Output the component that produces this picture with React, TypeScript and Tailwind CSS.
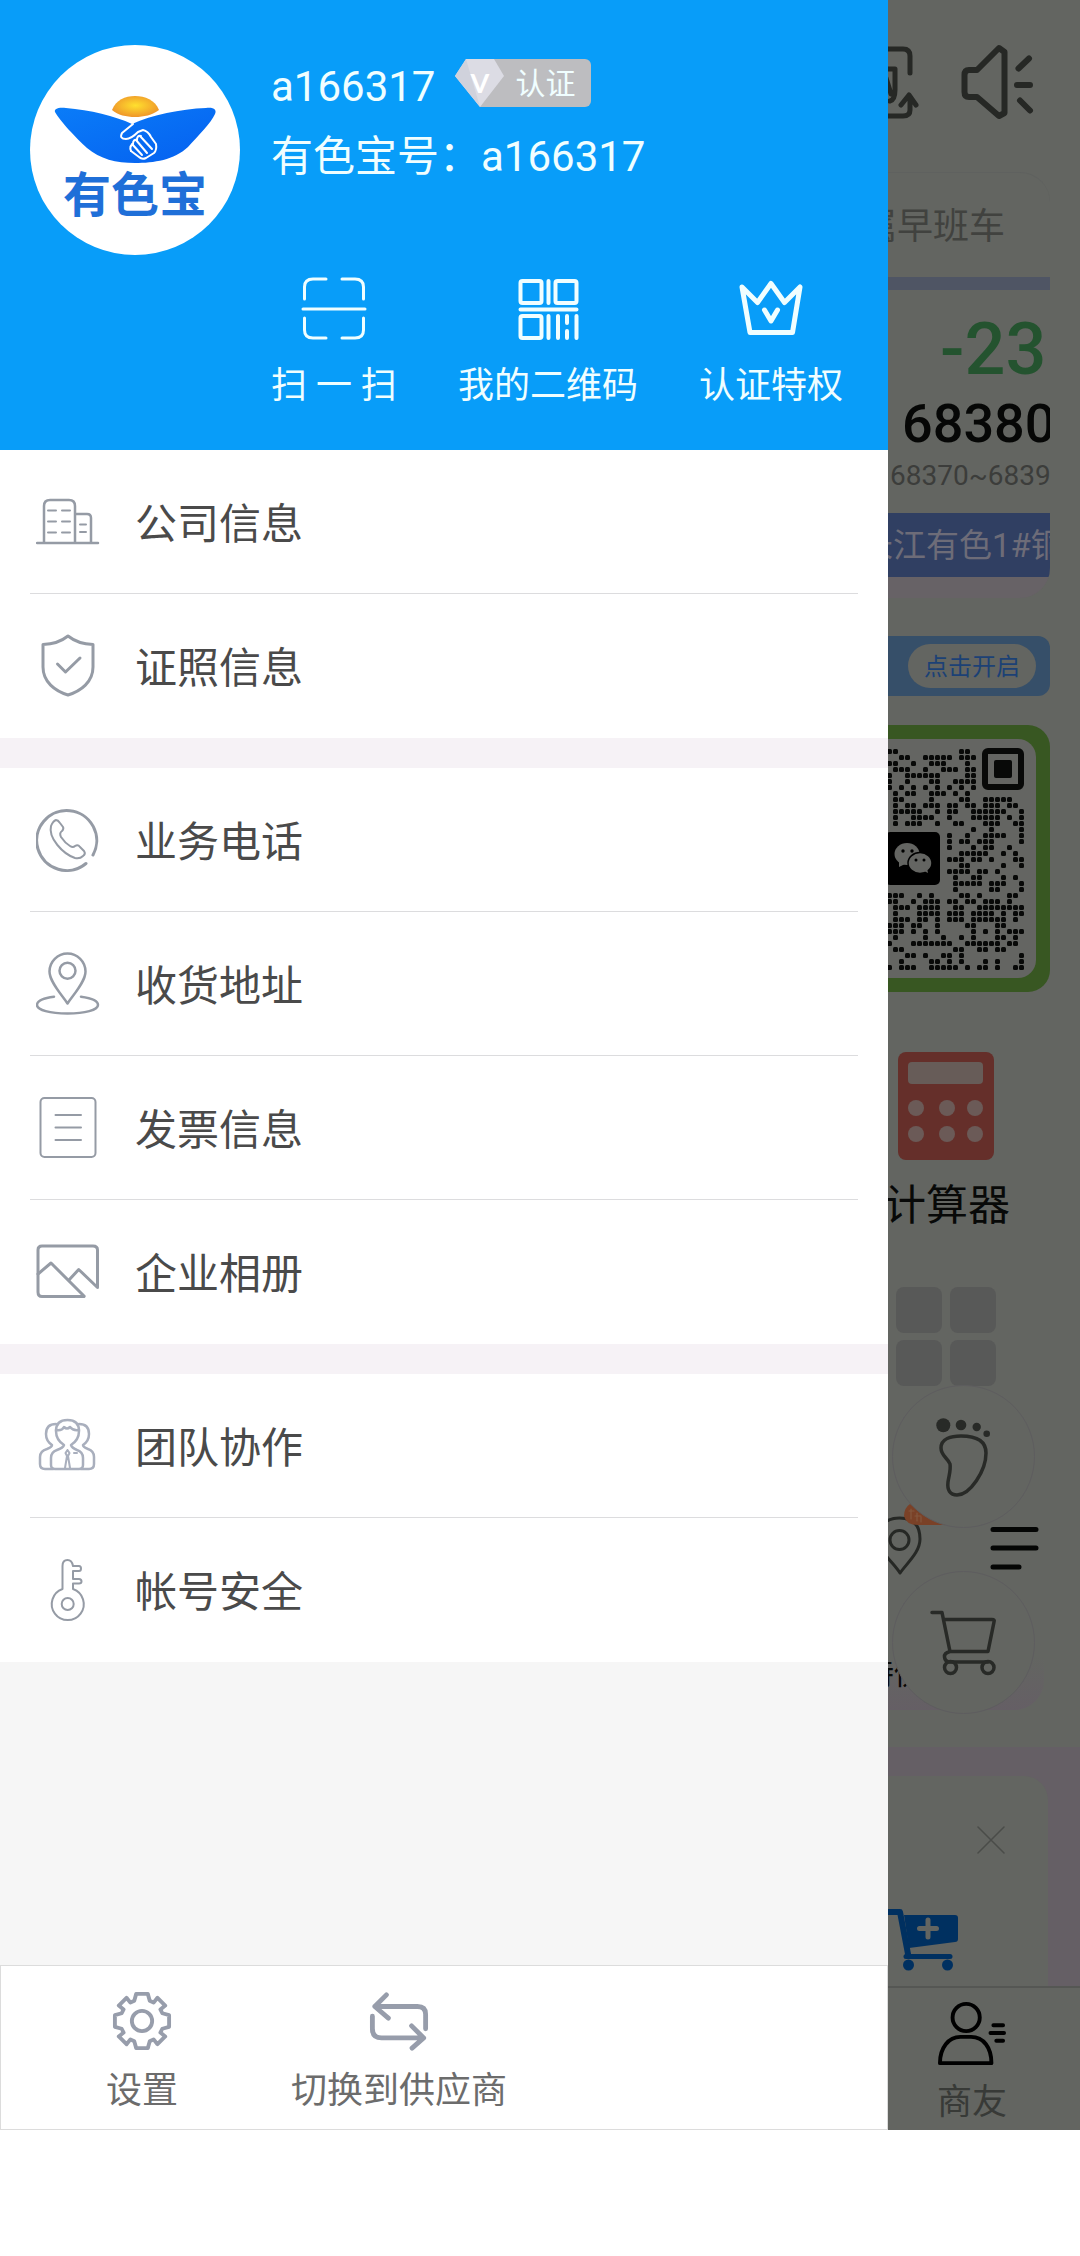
import React from 'react';

interface IconProps {
  children: React.ReactNode;
  className?: string;
  viewBox?: string;
  strokeWidth?: number;
}

interface MenuItem {
  label: string;
  icon: React.ReactNode;
}

const Icon: React.FC<IconProps> = ({ children, className = 'size-16', viewBox = '0 0 64 64', strokeWidth = 2.5 }) => (
  <svg
    className={className}
    viewBox={viewBox}
    fill="none"
    stroke="currentColor"
    strokeWidth={strokeWidth}
    strokeLinecap="round"
    strokeLinejoin="round"
    aria-hidden="true"
  >
    {children}
  </svg>
);

const menuGroups: MenuItem[][] = [
  [
    {
      label: '公司信息',
      icon: (
        <Icon>
          <path d="M1 53H62M8 53V16Q8 10 14 10H33Q39 10 39 16V53M39 24H51Q55 24 55 28V53" />
          <path d="M12 20.500H20M26 20.500H34M12 31.500H20M26 31.500H34M12 42.500H20M26 42.500H34M44 34.500H50M44 42H50" strokeWidth="2" />
        </Icon>
      ),
    },
    {
      label: '证照信息',
      icon: (
        <Icon strokeWidth={3}>
          <path d="M32 2Q22 10 7 10.500V33C7 48 19 57 32 61C45 57 57 48 57 33V10.500Q42 10 32 2Z" />
          <path d="M21.500 30L29.500 38L44 24" />
        </Icon>
      ),
    },
  ],
  [
    {
      label: '业务电话',
      icon: (
        <Icon strokeWidth={3}>
          <path d="M57 47A30 30 0 1 0 50 55.500" />
          <path
            strokeWidth="2"
            d="M15 18Q17 13 20 12Q22 12 24 15L27 19Q28 21 26 23Q23 25 25 29Q29 35 34 38Q37 40 39 38Q42 36 44 39L48 43Q50 46 47 48Q44 51 39 50C27 46 12 30 15 18Z"
          />
        </Icon>
      ),
    },
    {
      label: '收货地址',
      icon: (
        <Icon>
          <path d="M31.500 51.500C26 43 13.500 30 13.500 19.500A18 18 0 0 1 49.500 19.500C49.500 30 37 43 31.500 51.500Z" />
          <circle cx="31.500" cy="18.700" r="8" />
          <path d="M18 44.700C8 46 1 49 1 53C1 58 14 61.500 31.500 61.500C49 61.500 62 58 62 53C62 49 55 46 45 44.700" />
        </Icon>
      ),
    },
    {
      label: '发票信息',
      icon: (
        <Icon strokeWidth={2}>
          <rect x="4.500" y="2" width="55" height="59" rx="4" />
          <path d="M19.500 19H45M19.500 31.500H45M19.500 44H45" />
        </Icon>
      ),
    },
    {
      label: '企业相册',
      icon: (
        <Icon strokeWidth={3}>
          <path d="M48 56.500H6Q2 56.500 2 52V10Q2 6 6 6H57Q61.500 6 61.500 10V47.500L42.700 29.500L33 40" />
          <path d="M2 34L15 23L48 56" />
        </Icon>
      ),
    },
  ],
  [
    {
      label: '团队协作',
      icon: (
        <Icon className="size-16 text-[#a9afbd]">
          <path d="M28 31Q20 26 20 17Q20 6 31.500 6Q43 6 43 17Q43 26 35 31Q36 34 41 36Q47 38 47 44V51Q47 55 43 55H19Q15 55 15 51V44Q15 38 21 36Q27 34 28 31Z" />
          <path d="M20 16Q26 17 28 13Q31 16 34 13Q37 17 43 16" />
          <path d="M20 10Q10 10 10 20Q10 27 16 31Q16 33 11 35Q4 37 4 43V50Q4 55 9 55H17M43 10Q53 10 53 20Q53 27 47 31Q47 33 52 35Q58 37 58 43V50Q58 55 53 55H45" />
          <path d="M31.500 36L29.500 39L31 42L29 54M31.500 36L33.500 39L32 42L34 54M38 39H41" strokeWidth="2" />
        </Icon>
      ),
    },
    {
      label: '帐号安全',
      icon: (
        <Icon strokeWidth={2}>
          <path d="M26.500 31V8Q26.500 2 31.500 2Q36 2 37 8H43Q45 8 45 10.500Q45 13 43 13H37V21H43Q45.500 21 45.500 23.500Q45.500 25.500 43 25.500H37V31A16 16 0 1 1 26.500 31Z" />
          <circle cx="31.700" cy="46" r="6" />
        </Icon>
      ),
    },
  ],
];

const quickActions: MenuItem[] = [
  {
    label: '扫 一 扫',
    icon: (
      <Icon className="size-[66px]" viewBox="0 0 66 66" strokeWidth={3}>
        <path d="M3.500 23V11Q3.500 3 12 3H25M41 3H54Q62.500 3 62.500 11V23M3.500 42V54Q3.500 62 12 62H25M41 62H54Q62.500 62 62.500 54V42M2 33H64" />
      </Icon>
    ),
  },
  {
    label: '我的二维码',
    icon: (
      <Icon className="size-[66px]" viewBox="0 0 66 66" strokeWidth={4}>
        <rect x="5.500" y="5" width="21" height="22" rx="2" />
        <rect x="40.500" y="5" width="21" height="22" rx="2" />
        <rect x="5.500" y="40" width="21" height="22" rx="2" />
        <path d="M33.500 5V27M5.500 33.500H61.500M33.500 40V62M43 40V62M52 40V47M52 55V62M61.500 40V62" />
      </Icon>
    ),
  },
  {
    label: '认证特权',
    icon: (
      <Icon className="size-[66px]" viewBox="0 0 66 66" strokeWidth={5}>
        <path d="M4 11L19.500 26.500L33 7.500L46.500 26.500L62 11L54.500 56.500H12Z" />
        <path d="M26.500 34L33 45L39.500 34" />
      </Icon>
    ),
  },
];

// filled modules of the visible part of the code, one list of columns per row
const qrRows: number[][] = [
  [0, 1, 12, 13],
  [2, 3, 6, 7, 8, 9, 10, 12, 13, 14],
  [0, 1, 4, 7, 8, 9, 13],
  [1, 2, 3, 6, 9, 10, 11, 13, 14],
  [0, 3, 4, 5, 6, 7, 8, 13, 14],
  [0, 3, 7, 8, 11, 12, 13, 14],
  [0, 2, 4, 6, 8, 10, 12, 14],
  [1, 3, 4, 7, 8, 9, 11, 13],
  [1, 2, 7, 12, 13, 16, 17, 18, 19, 20],
  [1, 3, 4, 6, 7, 8, 10, 11, 13, 14, 16, 17, 18, 20, 21],
  [1, 2, 3, 4, 5, 8, 10, 11, 14, 15, 16, 17, 18, 19, 22],
  [1, 4, 5, 6, 7, 10, 14, 15, 16, 17, 18, 20, 22],
  [1, 3, 4, 5, 8, 11, 12, 16, 17, 18, 21, 22],
  [14, 17, 22],
  [10, 13, 16, 17, 18, 19, 22],
  [10, 12, 13, 15, 16, 17, 22],
  [10, 14, 16, 17, 20],
  [12, 13, 14, 15, 16, 19, 21],
  [10, 11, 12, 14, 15, 17, 21, 22],
  [12, 13, 19, 22],
  [10, 11, 12, 13, 15, 16, 18],
  [11, 14, 15, 19, 21],
  [11, 12, 13, 14, 15, 17, 18, 19, 22],
  [11, 17, 18, 22],
  [0, 1, 2, 5, 7, 12, 13, 15, 20, 21],
  [0, 1, 4, 6, 7, 8, 10, 11, 13, 14, 16, 17, 18, 20],
  [1, 2, 3, 5, 6, 7, 8, 11, 12, 15, 16, 17, 18, 19, 20, 21, 22],
  [1, 5, 6, 7, 8, 10, 11, 12, 14, 15, 16, 17, 19, 21, 22],
  [1, 2, 3, 5, 6, 8, 10, 11, 12, 14, 15, 16, 17, 18, 19, 21],
  [0, 1, 2, 4, 5, 8, 13, 14, 18, 19],
  [0, 1, 2, 4, 6, 8, 14, 16, 18, 20, 21, 22],
  [1, 6, 9, 12, 14, 18, 19, 21],
  [0, 4, 5, 6, 7, 8, 9, 10, 13, 14, 15, 16, 17, 18, 20, 21],
  [1, 2, 11, 12, 15, 16, 18, 19],
  [3, 4, 6, 9, 10, 12, 22],
  [2, 7, 8, 10, 12, 16, 18, 22],
  [0, 2, 3, 4, 7, 8, 9, 10, 11, 13, 15, 16, 18, 21, 22],
];

const Avatar = () => (
  <div className="flex size-[210px] shrink-0 flex-col items-center rounded-full bg-white">
    <svg className="h-[126px] w-[210px] shrink-0" viewBox="0 0 210 126" aria-hidden="true">
      <defs>
        <radialGradient id="sun" cx="50%" cy="45%" r="55%">
          <stop offset="0" stopColor="#ffe02e" />
          <stop offset="1" stopColor="#ef962a" />
        </radialGradient>
        <linearGradient id="boat" x1="0" y1="0" x2="1" y2="1">
          <stop offset="0" stopColor="#0a7cf8" />
          <stop offset="1" stopColor="#0560f0" />
        </linearGradient>
      </defs>
      <path d="M82 65C86 55 95 51 105 51C115 51 125 55 129 65C122 70 114 72 105 72C96 72 88 70 82 65Z" fill="url(#sun)" />
      <path
        d="M25 67C24 64 28 62 36 63C60 65 85 71 102 79C122 70 150 64 176 63C184 62 187 65 185 69C181 78 168 91 158 102C144 115 124 118 105 118C86 118 70 114 57 103C46 93 30 76 25 67Z"
        fill="url(#boat)"
      />
      <g fill="none" stroke="#fff" strokeWidth="2" strokeLinecap="round" strokeLinejoin="round">
        <path d="M103 79L92 88Q89 94 96 94Q101 94 108 87L113 85Q118 86 121 92L126 99Q127 105 124 108L116 113Q112 115 109 112L101 106" />
        <path d="M102 99L112 110M106 95L117 108M110 91L122 104M101 106Q99 101 103 99Q103 94 107 95Q107 90 111 91" />
      </g>
    </svg>
    <span className="text-5xl leading-[50px] font-bold text-[#1f6fd8]">有色宝</span>
  </div>
);

const VerifyBadge = () => (
  <button className="flex h-12 cursor-pointer">
    <svg className="h-12 w-[50px]" viewBox="0 0 50 48" aria-hidden="true">
      <path d="M25 48H50V0H11Z" fill="#bdbdc0" />
      <path d="M0 17L11 0H39L49 17L25 48Z" fill="#dcdce4" />
      <path d="M0 17L11 0L25 48Z" fill="#d0d2dc" />
      <text x="25" y="34" textAnchor="middle" fontSize="27" fontWeight="700" fill="#fff" fontFamily="Lato, sans-serif">
        V
      </text>
    </svg>
    <span className="rounded-r-md bg-[#bdbdc0] pt-0.5 pr-4 pl-2.5 text-[30px] leading-[46px]">认证</span>
  </button>
);

const DrawerHeader = () => (
  <header className="flex bg-[#089df9] pt-[45px] pb-[39px] pl-[30px] text-[#f0feff]">
    <Avatar />
    <div className="flex flex-col pt-[13px] pl-[31px] whitespace-nowrap">
      <div className="flex h-[50px] items-center gap-5 text-[42px] leading-[50px]">
        <span className="pt-2">a166317</span>
        <VerifyBadge />
      </div>
      <p className="mt-6 text-[42px] leading-[50px]">有色宝号：a166317</p>
      <nav className="mt-[94px] flex gap-[61px]">
        {quickActions.map((action) => (
          <button key={action.label} className="flex cursor-pointer flex-col items-center gap-[19px]">
            {action.icon}
            <span className="text-4xl leading-[50px]">{action.label}</span>
          </button>
        ))}
      </nav>
    </div>
  </header>
);

const MenuList = () => (
  <div className="flex flex-col gap-[30px] bg-[#f6f2f6]">
    {menuGroups.map((group, i) => (
      <ul key={i} className="bg-white px-[30px]">
        {group.map((item) => (
          <li key={item.label} className="h-36 border-b border-[#dcdcde] last:border-b-0">
            <button className="flex size-full cursor-pointer items-center gap-[35px] pl-1.5 text-left">
              <span className="text-[#959ba5]">{item.icon}</span>
              <span className="pt-1.5 text-[42px] leading-[50px] text-[#4a4a4a]">{item.label}</span>
            </button>
          </li>
        ))}
      </ul>
    ))}
  </div>
);

const DrawerFooter = () => (
  <footer className="flex gap-[113px] border border-[#dcdcdc] bg-white pt-[25px] pb-2 pl-[105px] text-[#6c6c6c]">
    <button className="flex cursor-pointer flex-col items-center gap-2.5">
      <Icon className="size-[60px] text-[#979dab]" viewBox="-31 -31 62 62" strokeWidth={4}>
        <path d="M-6-28H6L8-21L12-19L16-24L24-16L19-12L21-8L28-6V6L21 8L19 12L24 16L16 24L12 19L8 21L6 28H-6L-8 21L-12 19L-16 24L-24 16L-19 12L-21 8L-28 6V-6L-21-8L-19-12L-24-16L-16-24L-12-19L-8-21Z" />
        <circle r="10.500" />
      </Icon>
      <span className="text-4xl leading-[60px]">设置</span>
    </button>
    <button className="flex cursor-pointer flex-col items-center gap-2.5">
      <Icon className="size-[60px] text-[#979dab]" viewBox="0 0 62 62" strokeWidth={5}>
        <path d="M18 4L6 16L20 28M6 16H50Q58.500 16 58.500 24V39M3.500 26V39Q3.500 48.500 13 48.500H56M44 36L56.500 48.500L44.500 59" />
      </Icon>
      <span className="text-4xl leading-[60px]">切换到供应商</span>
    </button>
  </footer>
);

const QrCode = () => (
  <svg className="h-[239px] w-[148px]" viewBox="0 0 148 239" aria-hidden="true">
    {qrRows.map((cols, r) =>
      cols.map((c) => <rect key={`${r}-${c}`} x={c * 6 - 1} y={r * 6 + 10} width="5" height="5" rx="1.500" fill="#080908" />)
    )}
    <rect x="97" y="12" width="36" height="36" rx="3" fill="none" stroke="#080908" strokeWidth="6" />
    <rect x="106" y="21" width="18" height="18" rx="2" fill="#080908" />
    <rect x="-3" y="93" width="55" height="53" rx="5" fill="#000" />
    <ellipse cx="19" cy="115" rx="12.500" ry="11" fill="#646562" />
    <path d="M11 122L11 128L17 125Z" fill="#646562" />
    <ellipse cx="32" cy="124" rx="12" ry="10.500" fill="#646562" stroke="#000" strokeWidth="1.500" />
    <path d="M36 132L40 134L39 129Z" fill="#646562" />
    <g fill="#000">
      <circle cx="15" cy="112" r="1.700" />
      <circle cx="24" cy="112" r="1.700" />
      <circle cx="28" cy="121" r="1.500" />
      <circle cx="36" cy="121" r="1.500" />
    </g>
  </svg>
);

// The home page that stays visible, dimmed, next to the open drawer
const DimmedPage = () => (
  <main className="relative flex w-48 shrink-0 flex-col overflow-hidden bg-[#636561] whitespace-nowrap">
    <div className="flex h-[172px] gap-9 pt-10 text-[#262825]">
      <Icon className="h-[84px] w-8" viewBox="0 0 32 84" strokeWidth={5}>
        <path d="M-4 9H15Q22 9 22 16V33M-4 76H15Q22 76 22 70V57M13 65L21 55L28 65M-3 29H7V50Q7 60 2 61M-2 38L3 54" />
      </Icon>
      <Icon className="size-[84px]" viewBox="0 0 84 84" strokeWidth={6}>
        <path d="M8.500 35Q8.500 30 13 30H21L43 8L48.500 12V73L43 76L21 57H13Q8.500 57 8.500 52ZM73 18.500L62.500 28.500M61 45H74M64 60.500L74 70.500" />
      </Icon>
    </div>

    <section className="mr-[30px] h-[426px] overflow-hidden rounded-tr-[30px] rounded-br-[30px] border-t border-[#5f615f] bg-[#636561]">
      <div className="flex h-[104px] items-center justify-end pt-1 pr-[45px] text-4xl text-[#41423f]">有色金属早班车</div>
      <div className="h-[13px] bg-[#4f5564]" />
      <div className="mt-6 pl-[52px] text-7xl leading-[72px] font-medium text-[#24532f]">-23</div>
      <div className="mt-1 pl-3.5 text-[54px] leading-[68px] font-medium text-[#060706]">68380</div>
      <div className="pl-0.5 text-[28px] leading-9 text-[#3c3d3b]">68370~68390</div>
      <div className="mt-[19px] h-16 bg-[#303f62]">
        <div className="-ml-7 pt-0.5 text-[33px] leading-[62px] text-[#6d6c78]">长江有色1#铜</div>
      </div>
      <div className="h-6 bg-[#676266]" />
    </section>

    <section className="mt-[38px] mr-[30px] flex h-[60px] items-center justify-end rounded-r-xl bg-[#364f69] pr-3.5">
      <button className="h-11 cursor-pointer rounded-full bg-[#636561] px-4 pt-0.5 text-2xl text-[#1c4175]">点击开启</button>
    </section>

    <section className="mt-[29px] mr-[30px] rounded-r-[22px] bg-[#385722] py-3.5 pr-3.5">
      <div className="rounded-r-[18px] bg-[#646562]">
        <QrCode />
      </div>
    </section>

    <section className="mt-[60px] ml-2.5 w-24">
      <svg className="h-[108px] w-24" viewBox="0 0 96 108" aria-hidden="true">
        <rect width="96" height="108" rx="8" fill="#652f2a" />
        <rect x="10" y="10" width="75" height="22" rx="4" fill="#675c58" />
        <g fill="#6b5a57">
          <circle cx="18" cy="56" r="8" />
          <circle cx="49" cy="56" r="8" />
          <circle cx="77" cy="56" r="8" />
          <circle cx="18" cy="82" r="8" />
          <circle cx="49" cy="82" r="8" />
          <circle cx="77" cy="82" r="8" />
        </g>
      </svg>
      <div className="-ml-3.5 pt-4 text-[42px] leading-[60px] text-[#080908]">计算器</div>
    </section>

    <section className="mt-[51px] ml-2 grid w-[100px] grid-cols-2 gap-x-2 gap-y-[7px]">
      {[0, 1, 2, 3].map((n) => (
        <div key={n} className="size-[46px] rounded-lg bg-[#585958]" />
      ))}
    </section>

    <section className="mt-[116px] flex h-[76px] items-end gap-[38px]">
      <Icon className="h-[76px] w-16 text-[#262825]" viewBox="0 0 64 76" strokeWidth={3}>
        <path d="M12 71C5 60-9 50-9 37Q-9 16 11.500 16Q32 16 32 37C32 50 20 60 12 71Z" />
        <circle cx="11.500" cy="38" r="9.500" />
        <path d="M22 2L30 8L44 17L59 23H30Q18 23 16 14Q16 6 22 2Z" fill="#7a4127" stroke="none" />
        <path d="M21 9H26M23 7V17M29 11V19M27 14H33M33 15V20" stroke="#84583f" strokeWidth="1.200" />
      </Icon>
      <Icon className="h-[54px] w-[50px] text-[#050605]" viewBox="0 0 50 54" strokeWidth={5}>
        <path d="M3 5.500H46M3 24H46M3 43H29" />
      </Icon>
    </section>
    <section className="mr-9 h-[132px] rounded-br-[30px] bg-linear-to-b from-[#636561] from-60% to-[#655f65] pt-[68px]">
      <div className="-ml-6 text-[30px] leading-[56px] text-[#080908]">特供</div>
    </section>

    <section className="mt-[37px] flex h-[239px] bg-[#655f65] pt-[29px] pr-8">
      <div className="flex w-full flex-col justify-between rounded-tr-3xl bg-[#636561] pt-[50px] pb-3.5">
        <button className="ml-[89px] cursor-pointer text-[#4a4c49]" aria-label="关闭">
          <Icon className="size-7" viewBox="0 0 28 28" strokeWidth={1.5}>
            <path d="M1 1L27 27M27 1L1 27" />
          </Icon>
        </button>
        <Icon className="h-16 w-[72px] text-[#003060]" viewBox="0 0 72 64" strokeWidth={6}>
          <path d="M-3 4H12L20 46" />
          <path d="M16 7H67Q70 7 70 10V31Q70 34 67 34L21 40Z" fill="currentColor" stroke="none" />
          <path d="M18 48.500H62" strokeWidth="5" />
          <circle cx="20.500" cy="57" r="5.500" fill="currentColor" stroke="none" />
          <circle cx="59.500" cy="57" r="5.500" fill="currentColor" stroke="none" />
          <path d="M40 12V29M31.500 20.500H48.500" stroke="#636561" strokeWidth="5" />
        </Icon>
      </div>
    </section>

    <nav className="flex h-36 justify-center border-t-2 border-[#555754] pt-3 pr-6">
      <button className="flex cursor-pointer flex-col items-center gap-2">
        <Icon className="h-[70px] w-[72px] text-black" viewBox="0 0 72 70" strokeWidth={4}>
          <circle cx="30" cy="18" r="14" />
          <path d="M3 65C3 49 12 38 24 38H35C48 38 56 49 56 65ZM58 26H68M55 34H69M61 42H68" />
        </Icon>
        <span className="text-[35px] leading-[54px] text-[#383a37]">商友</span>
      </button>
    </nav>

    {/* floating shortcuts */}
    <div className="absolute top-[1385px] left-1 flex flex-col gap-[43px] text-[#282a27]">
      <button
        className="flex size-[143px] cursor-pointer items-center justify-center rounded-full border border-[#5e5d5f] bg-[#636561]"
        aria-label="足迹"
      >
        <Icon className="h-[84px] w-[60px]" viewBox="0 0 60 84" strokeWidth={3.5}>
          <g fill="currentColor" stroke="none">
            <circle cx="9.300" cy="10.300" r="7" />
            <circle cx="27" cy="10" r="5.300" />
            <circle cx="42.700" cy="12" r="4.200" />
            <circle cx="52.700" cy="18.700" r="3.300" />
          </g>
          <path d="M7 33C7 24 17 21 27 21C43 21 52 26 52 38C52 56 36 80 23 80C16 80 13 75 14 67C15 60 17 55 16 49C14 43 7 41 7 33Z" />
        </Icon>
      </button>
      <button
        className="flex size-[143px] cursor-pointer items-center justify-center rounded-full border border-[#5e5d5f] bg-[#636561]"
        aria-label="购物车"
      >
        <Icon className="size-[70px]" viewBox="0 0 70 70" strokeWidth={3.5}>
          <path d="M3 4.500H13L21 43.500M15 11.500H63Q66 11.500 65 14L59 43.500H21Q15 45 15.500 49Q16 54 21 54H59" />
          <circle cx="21.500" cy="59.500" r="6" />
          <circle cx="59" cy="59.500" r="6" />
        </Icon>
      </button>
    </div>
  </main>
);

const App: React.FC = () => {
  return (
    <div className="min-h-screen bg-white font-['Roboto','Noto_Sans_CJK_SC',sans-serif]">
      <div className="flex">
        <aside className="flex min-w-0 flex-1 flex-col bg-[#f6f6f6]">
          <DrawerHeader />
          <MenuList />
          <div className="flex-1" />
          <DrawerFooter />
        </aside>
        <DimmedPage />
      </div>
    </div>
  );
};

export default App;
